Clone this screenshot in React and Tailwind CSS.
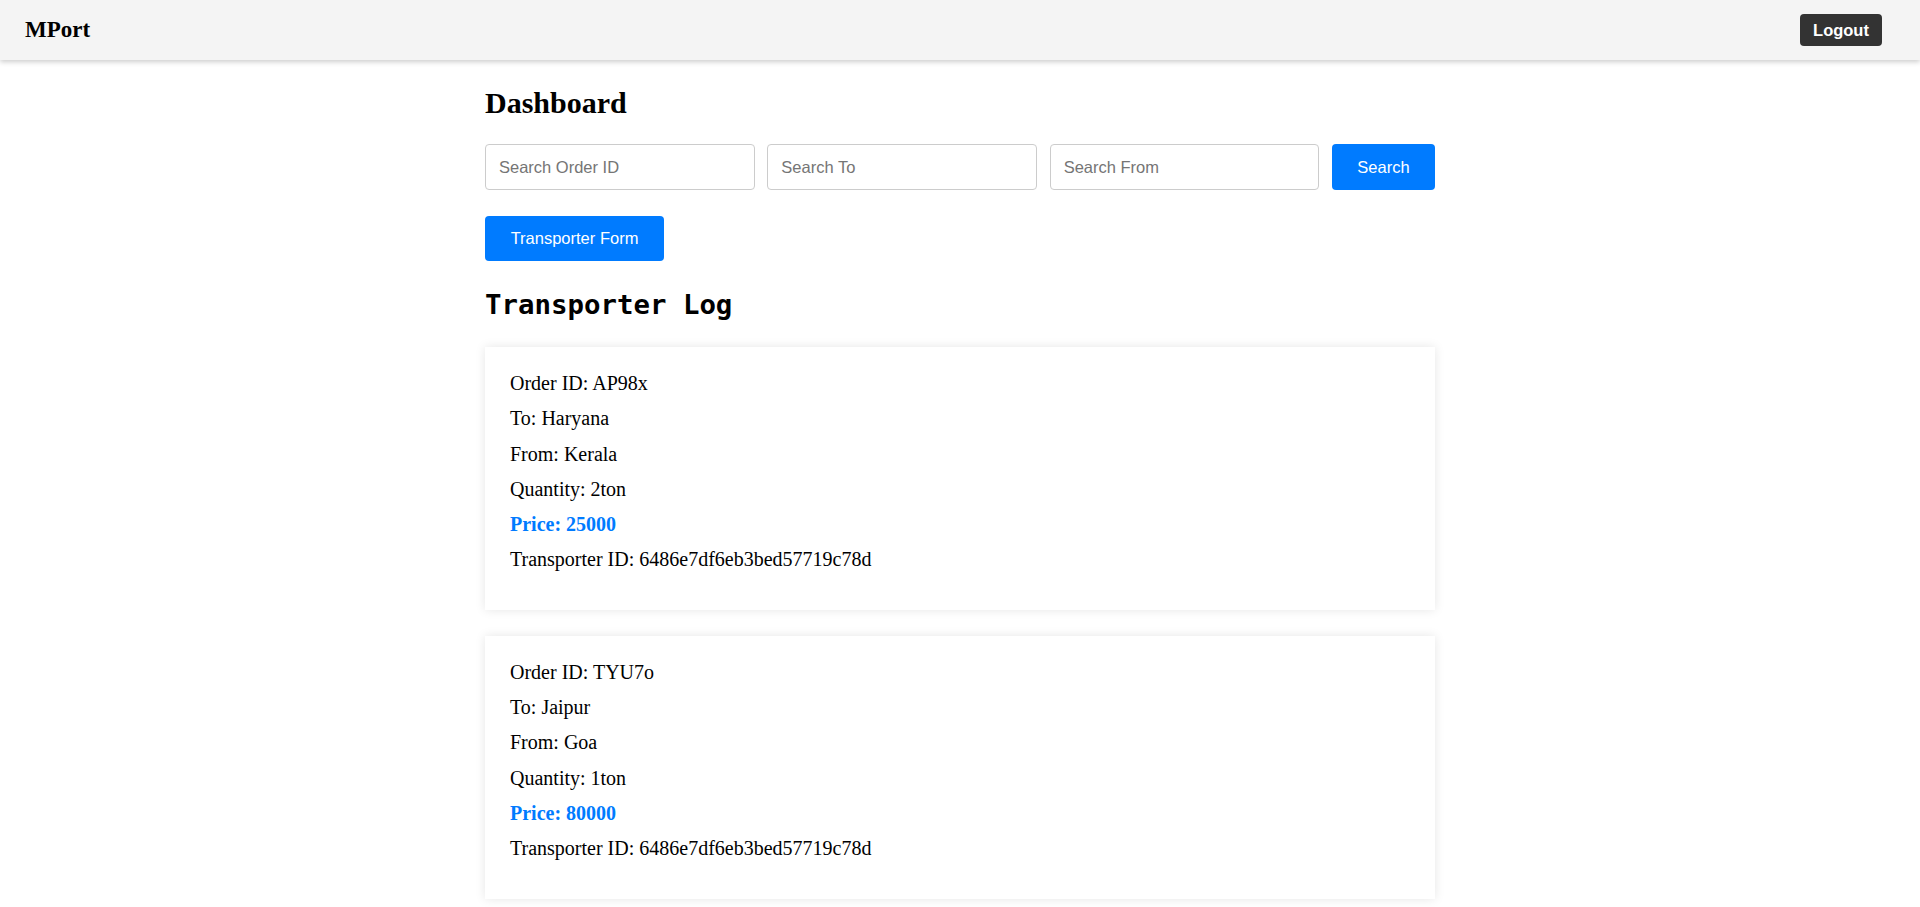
import React, { useState } from "react";

const orders = [
  {
    orderId: "AP98x",
    to: "Haryana",
    from: "Kerala",
    quantity: "2ton",
    price: 25000,
    transporterId: "6486e7df6eb3bed57719c78d",
  },
  {
    orderId: "TYU7o",
    to: "Jaipur",
    from: "Goa",
    quantity: "1ton",
    price: 80000,
    transporterId: "6486e7df6eb3bed57719c78d",
  },
];

function OrderCard({ order }) {
  return (
    <div className="bg-white p-[25px] pb-[26px] shadow-[0_0_10px_rgba(0,0,0,0.1)] mb-[26px]">
      <p className="leading-[23.3px] mb-[12px]">Order ID: {order.orderId}</p>
      <p className="leading-[23.3px] mb-[12px]">To: {order.to}</p>
      <p className="leading-[23.3px] mb-[12px]">From: {order.from}</p>
      <p className="leading-[23.3px] mb-[12px]">Quantity: {order.quantity}</p>
      <p className="leading-[23.3px] mb-[12px] font-bold text-[#007bff]">
        Price: {order.price}
      </p>
      <p className="leading-[23.3px] mb-[12px]">
        Transporter ID: {order.transporterId}
      </p>
    </div>
  );
}

export default function App() {
  const [orderId, setOrderId] = useState("");
  const [to, setTo] = useState("");
  const [from, setFrom] = useState("");

  return (
    <div className="min-h-screen bg-white text-black font-['Liberation_Serif',serif]">
      <header className="h-[60px] bg-[#f4f4f4] flex items-center justify-between pl-[25px] pr-[38px] shadow-[0_2px_5px_rgba(0,0,0,0.2)]">
        <h2 className="text-[23px] font-bold leading-[28px]">MPort</h2>
        <button className="w-[82px] h-[32px] bg-[#333] text-white font-bold text-[16.5px] rounded-[4px] font-['Liberation_Sans',sans-serif]">
          Logout
        </button>
      </header>

      <main className="max-w-[950px] mx-auto pt-[25px]">
        <h2 className="text-[30px] font-bold leading-[35px]">Dashboard</h2>

        <div className="flex gap-[12.5px] mt-[24px] font-['Liberation_Sans',sans-serif]">
          <input
            type="text"
            placeholder="Search Order ID"
            value={orderId}
            onChange={(e) => setOrderId(e.target.value)}
            className="flex-1 min-w-0 h-[46px] px-[13px] text-[16.5px] border border-[#ccc] rounded-[4px] placeholder:text-[#757575] outline-none"
          />
          <input
            type="text"
            placeholder="Search To"
            value={to}
            onChange={(e) => setTo(e.target.value)}
            className="flex-1 min-w-0 h-[46px] px-[13px] text-[16.5px] border border-[#ccc] rounded-[4px] placeholder:text-[#757575] outline-none"
          />
          <input
            type="text"
            placeholder="Search From"
            value={from}
            onChange={(e) => setFrom(e.target.value)}
            className="flex-1 min-w-0 h-[46px] px-[13px] text-[16.5px] border border-[#ccc] rounded-[4px] placeholder:text-[#757575] outline-none"
          />
          <button className="w-[103px] h-[46px] bg-[#007bff] text-white text-[16.5px] rounded-[4px]">
            Search
          </button>
        </div>

        <button className="mt-[26px] w-[179px] h-[45px] bg-[#007bff] text-white text-[16.5px] rounded-[4px] font-['Liberation_Sans',sans-serif]">
          Transporter Form
        </button>

        <h2 className="mt-[28px] mb-[26px] text-[27.4px] font-bold leading-[32px] font-['DejaVu_Sans_Mono',monospace]">
          Transporter Log
        </h2>

        <div className="text-[20px]">
          {orders.map((o) => (
            <OrderCard key={o.orderId} order={o} />
          ))}
        </div>
      </main>
    </div>
  );
}
